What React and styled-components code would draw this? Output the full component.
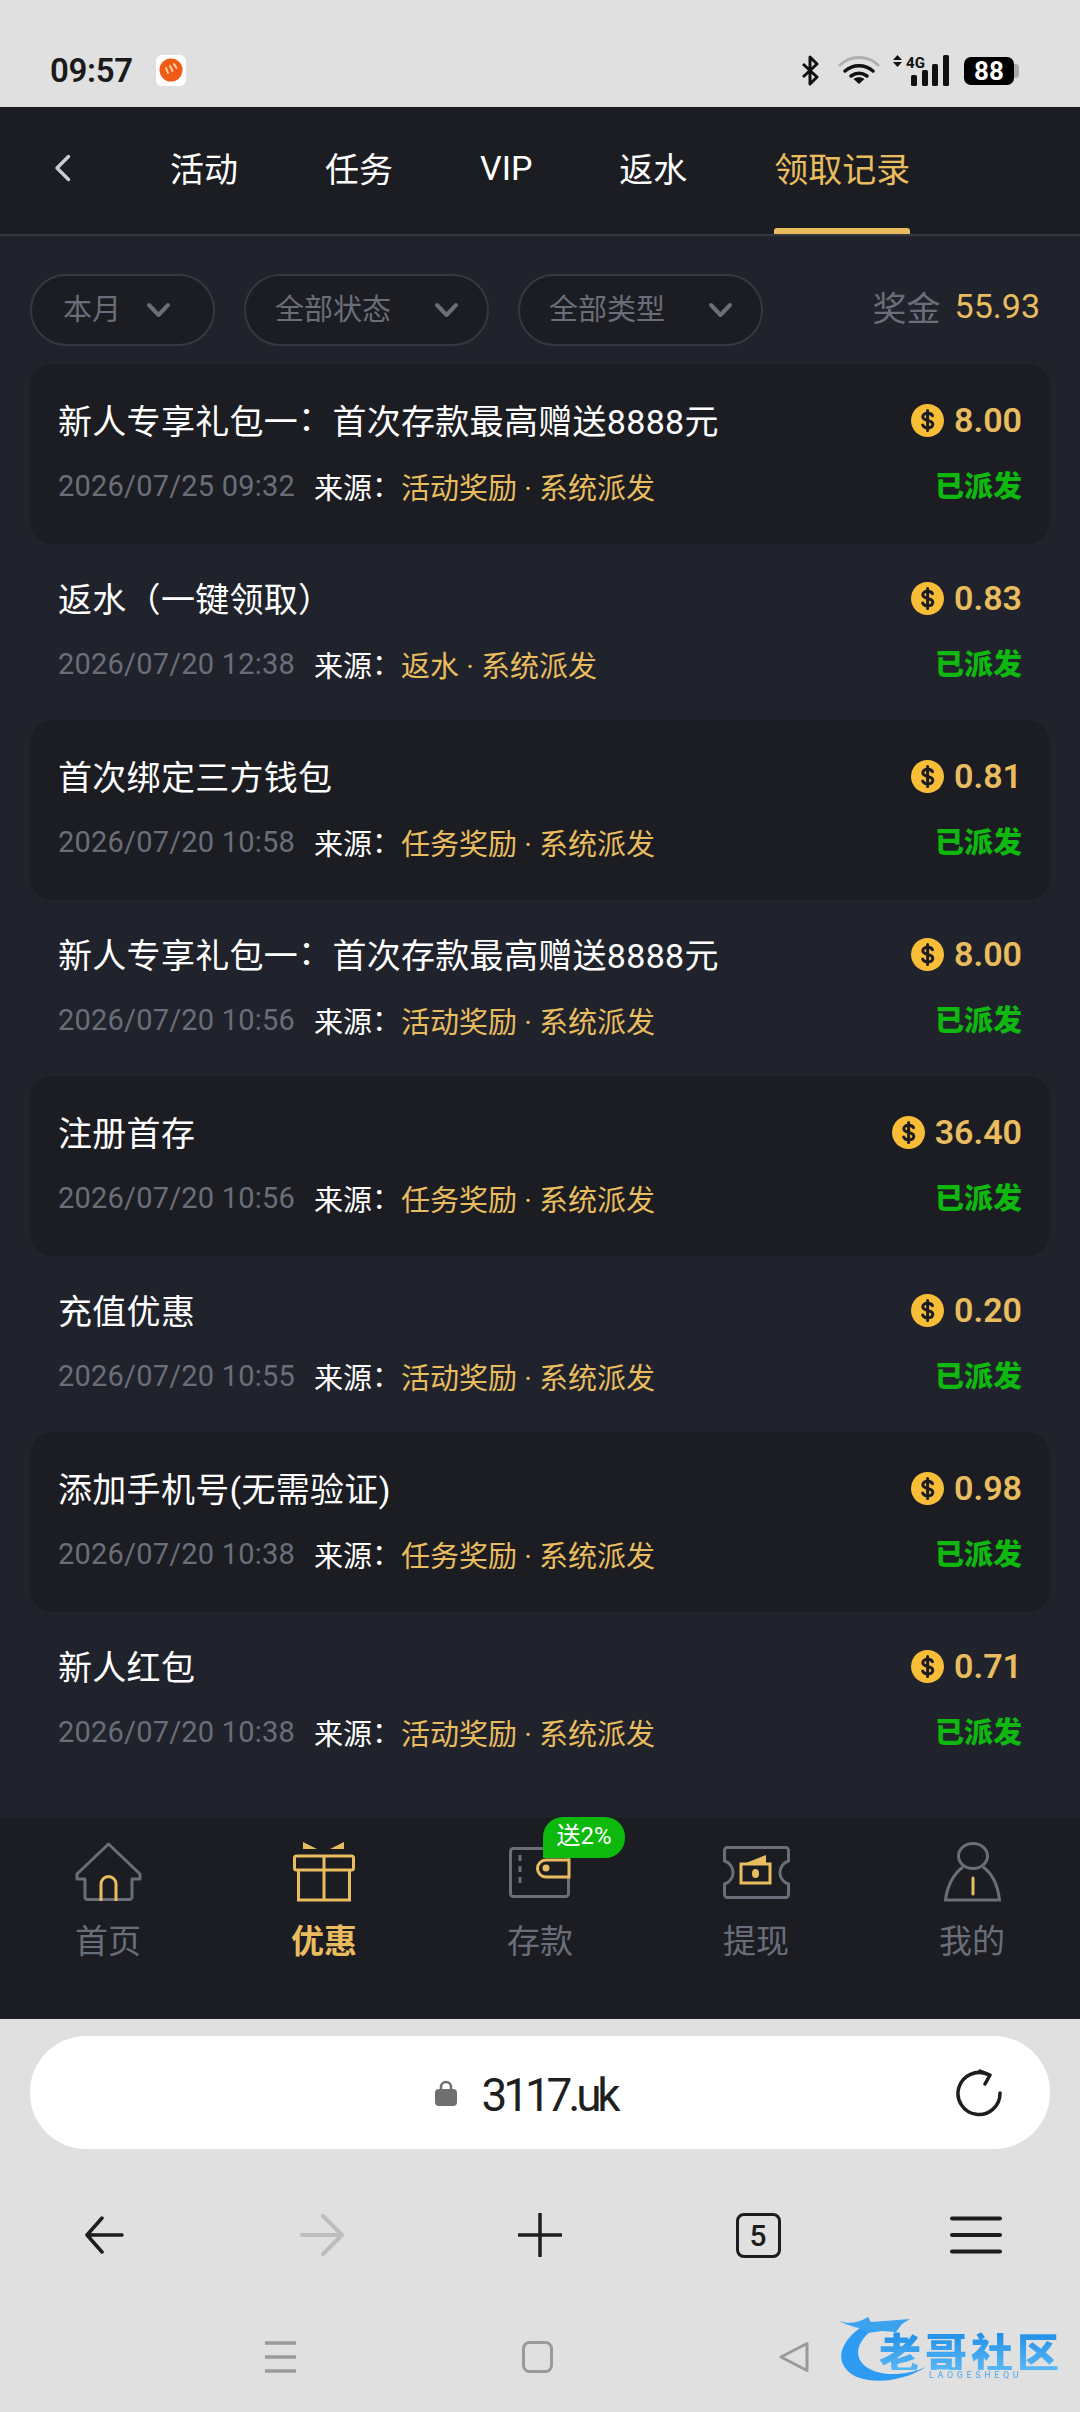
import React from 'react'
import styled, {createGlobalStyle} from 'styled-components'

const Gold = '#e9bd5f'
const Grey = '#6a6e78'
const Sans = `Roboto, "Noto Sans CJK SC", sans-serif`

const GlobalStyle = createGlobalStyle`
  html, body {
    margin: 0;
    padding: 0;
    background: #e0e0e0;
    font-family: ${Sans};
  }
  * { box-sizing: border-box; }
`
const Page = styled.div`
  position: relative;
  display: flex;
  flex-direction: column;
  width: 1080px;
  height: 2412px;
  overflow: hidden;
  background: #e0e0e0;
`
const StatusBar = styled.div`
  display: flex;
  align-items: flex-start;
  height: 107px;
  padding: 55px 66px 0 50px;
  flex: none;
`
const Clock = styled.div`
  font-size: 33px;
  line-height: 31px;
  font-weight: 600;
  letter-spacing: -0.3px;
  color: #1a1a1a;
  width: 106px;
`
const StatusIcons = styled.div`
  display: flex;
  align-items: flex-start;
  margin-left: auto;
`
const BatteryWrap = styled.div`
  position: relative;
  display: flex;
  align-items: center;
  justify-content: center;
  width: 50px;
  height: 28px;
  margin: 2px 0 0 15px;
  border-radius: 7px;
  background: #000;
  color: #fff;
  font-size: 26px;
  font-weight: 700;
  line-height: 28px;
  &::after {
    content: '';
    position: absolute;
    right: -5px;
    top: 7px;
    width: 5px;
    height: 14px;
    border-radius: 0 4px 4px 0;
    background: #a9a9a9;
  }
`
const TopNav = styled.div`
  display: flex;
  align-items: stretch;
  height: 129px;
  flex: none;
  background: #1c1d22;
  border-bottom: 2px solid #353842;
  padding-left: 54px;
`
const BackIcon = styled.svg`
  align-self: center;
  width: 17px;
  height: 28px;
  margin: -6px 99px 0 0;
  flex: none;
`
const Tabs = styled.div`
  display: flex;
  gap: 87px;
`
const Tab = styled.div`
  position: relative;
  display: flex;
  align-items: center;
  padding-bottom: 6px;
  font-size: 34px;
  color: ${p => (p.$active ? Gold : '#fff')};
  &::after {
    content: '';
    display: ${p => (p.$active ? 'block' : 'none')};
    position: absolute;
    left: 0;
    right: 0;
    bottom: 0;
    height: 6px;
    border-radius: 3px 3px 0 0;
    background: ${Gold};
  }
`
const Content = styled.div`
  flex: 1;
  min-height: 0;
  background: #20232b;
  overflow: hidden;
`
const FilterBar = styled.div`
  display: flex;
  align-items: center;
  gap: 29px;
  padding: 38px 40px 19px 30px;
`
const Pill = styled.div`
  display: flex;
  align-items: center;
  height: 72px;
  gap: ${p => (p.$short ? 25 : 43)}px;
  padding: ${p => (p.$short ? '0 42px 6px 31px' : '0 28px 6px 29px')};
  border: 2px solid #353842;
  border-radius: 36px;
  background: #1c1d22;
  color: ${Grey};
  font-size: 29px;
  svg { margin-top: 6px; }
`
const Bonus = styled.div`
  display: flex;
  align-items: center;
  gap: 14px;
  margin-left: auto;
  padding-bottom: 8px;
  font-size: 34px;
  color: ${Grey};
  span { color: ${Gold}; }
`
const Row = styled.div`
  display: flex;
  flex-direction: column;
  gap: 17px;
  height: ${p => (p.$dark ? 180 : 178)}px;
  margin: ${p => (p.$dark ? '-1px 30px' : '0 30px')};
  padding: ${p => (p.$dark ? 30 : 29)}px 28px 0;
  border-radius: 22px;
  background: ${p => (p.$dark ? '#1c1d22' : 'transparent')};
`
const RowLine = styled.div`
  display: flex;
  align-items: center;
  justify-content: space-between;
  height: 50px;
`
const Title = styled.div`
  font-size: 34px;
  letter-spacing: 0.3px;
  color: #fff;
  white-space: nowrap;
`
const Colon = styled.span`
  display: inline-block;
  transform: translateY(-0.08em);
`
const Amount = styled.div`
  display: flex;
  align-items: center;
  gap: 10px;
  padding-top: 2px;
  font-size: 34px;
  font-weight: 600;
  color: ${Gold};
`
const Coin = styled.svg`
  width: 33px;
  height: 33px;
`
const Meta = styled.div`
  display: flex;
  align-items: center;
  font-size: 29px;
  color: #fff;
  white-space: nowrap;
`
const Time = styled.span`
  color: ${Grey};
  margin-right: 19px;
  letter-spacing: 0.2px;
`
const Source = styled.span`
  color: ${Gold};
`
const Status = styled.div`
  margin-top: -4px;
  font-size: 29px;
  font-weight: 900;
  color: #0eb80e;
`
const BottomNav = styled.div`
  position: relative;
  display: grid;
  grid-template-columns: repeat(5, 1fr);
  height: 201px;
  flex: none;
  background: #1c1d22;
`
const NavItem = styled.div`
  position: relative;
  display: flex;
  flex-direction: column;
  align-items: center;
  padding-top: 24px;
  font-size: 33px;
  font-weight: ${p => (p.$active ? 700 : 400)};
  color: ${p => (p.$active ? Gold : Grey)};
`
const NavIconBox = styled.div`
  display: flex;
  align-items: center;
  justify-content: center;
  height: 60px;
  margin-bottom: 17px;
`
const NavLabel = styled.div`
  line-height: 46px;
`
const Badge = styled.div`
  position: absolute;
  top: -1px;
  left: 111px;
  width: 82px;
  height: 41px;
  border-radius: 20px 20px 20px 0;
  background: #0cb90c;
  color: #fff;
  font-size: 24px;
  font-weight: 400;
  line-height: 39px;
  text-align: center;
`
const AddressWrap = styled.div`
  flex: none;
  padding: 17px 30px 0;
`
const AddressBar = styled.div`
  position: relative;
  display: flex;
  align-items: center;
  justify-content: center;
  gap: 25px;
  height: 113px;
  border-radius: 56px;
  background: #fff;
  padding-right: 29px;
`
const Url = styled.div`
  padding-top: 5px;
  font-size: 46px;
  font-weight: 400;
  letter-spacing: -4.2px;
  color: #1f1f1f;
`
const Reload = styled.svg`
  position: absolute;
  right: 47px;
  top: 33px;
  width: 48px;
  height: 48px;
`
const Toolbar = styled.div`
  display: grid;
  grid-template-columns: repeat(5, 218px);
  justify-content: center;
  justify-items: center;
  align-items: center;
  height: 116px;
  margin-top: 28px;
  flex: none;
`
const TabCount = styled.div`
  display: flex;
  align-items: center;
  justify-content: center;
  width: 45px;
  height: 45px;
  border: 3px solid #1d1d1d;
  border-radius: 8px;
  color: #1d1d1d;
  font-size: 30px;
  font-weight: 500;
`
const SystemNav = styled.div`
  display: grid;
  grid-template-columns: repeat(3, 257px);
  justify-content: center;
  justify-items: center;
  height: 119px;
  padding: 48px 6px 0 0;
  flex: none;
`
const Logo = styled.div`
  position: absolute;
  left: 838px;
  top: 2315px;
  width: 224px;
  height: 68px;
  filter: blur(0.6px);
`
const LogoArc = styled.svg`
  position: absolute;
  left: 0;
  top: 0;
  width: 224px;
  height: 68px;
`
const LogoText = styled.div`
  position: absolute;
  left: 41px;
  top: 17px;
  font-family: "Noto Sans CJK SC", sans-serif;
  font-size: 42px;
  line-height: 38px;
  font-weight: 900;
  letter-spacing: 4px;
  white-space: nowrap;
  color: transparent;
  background: linear-gradient(#1f8fe8, #59b7f5);
  background-clip: text;
`
const LogoSub = styled.div`
  position: absolute;
  left: 91px;
  top: 55px;
  font-size: 9px;
  line-height: 10px;
  font-weight: 500;
  letter-spacing: 3.6px;
  color: #6cb2ea;
`

const records = [
  {title: '新人专享礼包一：首次存款最高赠送8888元', amount: '8.00', time: '2026/07/25 09:32', source: '活动奖励 · 系统派发'},
  {title: '返水（一键领取）', amount: '0.83', time: '2026/07/20 12:38', source: '返水 · 系统派发'},
  {title: '首次绑定三方钱包', amount: '0.81', time: '2026/07/20 10:58', source: '任务奖励 · 系统派发'},
  {title: '新人专享礼包一：首次存款最高赠送8888元', amount: '8.00', time: '2026/07/20 10:56', source: '活动奖励 · 系统派发'},
  {title: '注册首存', amount: '36.40', time: '2026/07/20 10:56', source: '任务奖励 · 系统派发'},
  {title: '充值优惠', amount: '0.20', time: '2026/07/20 10:55', source: '活动奖励 · 系统派发'},
  {title: '添加手机号(无需验证)', amount: '0.98', time: '2026/07/20 10:38', source: '任务奖励 · 系统派发'},
  {title: '新人红包', amount: '0.71', time: '2026/07/20 10:38', source: '活动奖励 · 系统派发'},
]

const tabs = ['活动', '任务', 'VIP', '返水']

// the full-width colon sits mid-height in the reference
const withColon = text => {
  const [head, tail] = text.split('：')
  return tail === undefined ? text : <>{head}<Colon>：</Colon>{tail}</>
}

const Chevron = () => (
  <svg width="25" height="16" viewBox="0 0 25 16" fill="none">
    <path d="M3 3l9.500 10L22 3" stroke={Grey} strokeWidth="4" strokeLinecap="round" strokeLinejoin="round"/>
  </svg>
)

const CoinIcon = () => (
  <Coin viewBox="0 0 33 33">
    <circle cx="16.500" cy="16.500" r="16.500" fill="#f8bd37"/>
    <path d="M21.500 11.600c-.8-1.600-2.600-2.400-4.800-2.400-2.800 0-4.900 1.400-4.900 3.600 0 4.900 10 2.600 10 7.500 0 2.300-2.200 3.600-5 3.600-2.400 0-4.300-1-5.100-2.800M16.600 6.400v20.200" fill="none" stroke="#1c1d22" strokeWidth="3" strokeLinecap="round"/>
  </Coin>
)

const HomeIcon = () => (
  <svg width="67" height="60" viewBox="0 0 67 60" fill="none">
    <path d="M33.500 2L65 32v5h-8v18a2.500 2.500 0 0 1-2.500 2.500h-42A2.500 2.500 0 0 1 10 55V37H2v-5z" stroke={Grey} strokeWidth="3" strokeLinejoin="round"/>
    <path d="M26 59V42a7.500 7.500 0 0 1 15 0v17" stroke={Gold} strokeWidth="3"/>
  </svg>
)

const GiftIcon = () => (
  <svg width="62" height="60" viewBox="0 0 62 60" fill="none">
    <path d="M10 0l14 7H10zM51 0L37 7h14z" fill={Gold}/>
    <rect x="1.500" y="14" width="59" height="14" rx="2" stroke={Gold} strokeWidth="3"/>
    <path d="M5.500 28v30h51V28M31 14v44" stroke={Gold} strokeWidth="3"/>
  </svg>
)

const WalletIcon = () => (
  <svg width="62" height="51" viewBox="0 0 62 51" fill="none">
    <rect x="1.500" y="1.500" width="58" height="48" rx="3" stroke={Grey} strokeWidth="3"/>
    <path d="M11 8v33" stroke={Grey} strokeWidth="3" strokeDasharray="6 5"/>
    <path d="M60 13H37a8.500 8.500 0 0 0 0 17h23z" fill="#1c1d22" stroke={Gold} strokeWidth="3"/>
    <circle cx="37" cy="21" r="3.500" fill={Gold}/>
  </svg>
)

const TicketIcon = () => (
  <svg width="67" height="53" viewBox="0 0 67 53" fill="none">
    <path d="M5 1.500h57a3 3 0 0 1 3.500 3V15a12 12 0 0 0 0 23v10.500a3 3 0 0 1-3.500 3H5a3 3 0 0 1-3.500-3V38a12 12 0 0 0 0-23V4.500a3 3 0 0 1 3.500-3z" stroke={Grey} strokeWidth="3"/>
    <rect x="18" y="18" width="29" height="19" stroke={Gold} strokeWidth="3"/>
    <path d="M23 17l20-8v8z" fill={Gold}/>
    <ellipse cx="32.500" cy="27.500" rx="3.500" ry="4.500" fill={Gold}/>
  </svg>
)

const PersonIcon = () => (
  <svg width="57" height="60" viewBox="0 0 57 60" fill="none">
    <ellipse cx="29" cy="14" rx="14.500" ry="12.500" stroke={Grey} strokeWidth="3"/>
    <path d="M19 25C9 32 3 45 1.500 58h54C54 45 49 32 39 25" stroke={Grey} strokeWidth="3"/>
    <path d="M29 36v16" stroke={Gold} strokeWidth="3" strokeLinecap="round"/>
  </svg>
)

const navItems = [
  {label: '首页', icon: <HomeIcon/>},
  {label: '优惠', icon: <GiftIcon/>, active: true},
  {label: '存款', icon: <WalletIcon/>, badge: '送2%'},
  {label: '提现', icon: <TicketIcon/>},
  {label: '我的', icon: <PersonIcon/>},
]

export default function App() {
  return (
    <Page>
      <GlobalStyle/>
      <StatusBar>
        <Clock>09:57</Clock>
        <svg width="30" height="31" viewBox="0 0 30 31">
          <rect width="30" height="31" rx="6" fill="#fff"/>
          <circle cx="15" cy="15" r="11.500" fill="#ef5a16"/>
          <path d="M10 13l2 5M14 11l2.500 5M18 9l2.500 4" stroke="#ffd9b0" strokeWidth="1.800" strokeLinecap="round"/>
        </svg>
        <StatusIcons>
          <svg width="18" height="31" viewBox="0 0 18 31" fill="none">
            <path d="M2 9l14 13-7 7V2l7 7L2 22" stroke="#111" strokeWidth="3" strokeLinejoin="round"/>
          </svg>
          <svg width="42" height="29" viewBox="0 0 42 29" fill="none" style={{marginLeft: 19}}>
            <path d="M2 10C12 0 30 0 40 10" stroke="#b0b0b0" strokeWidth="3" strokeLinecap="round"/>
            <path d="M7 16c8-7 20-7 28 0M13 21c5-3.500 11-3.500 16 0" stroke="#111" strokeWidth="3.500" strokeLinecap="round"/>
            <path d="M15.500 24L21 29l5.500-5c-3-2.500-8-2.500-11 0z" fill="#111"/>
          </svg>
          <svg width="56" height="31" viewBox="0 0 56 31" style={{marginLeft: 13}}>
            <path d="M4.500 0L9 5H0zM4.500 12L0 7h9z" fill="#111"/>
            <text x="13" y="13" fontFamily="Roboto, sans-serif" fontSize="15" fontWeight="700" fill="#111" textLength="19">4G</text>
            <rect x="18" y="20" width="6" height="11" rx="1.500" fill="#111"/>
            <rect x="29" y="15" width="6" height="16" rx="1.500" fill="#111"/>
            <rect x="39" y="9" width="6" height="22" rx="1.500" fill="#111"/>
            <rect x="50" y="0" width="6" height="31" rx="1.500" fill="#111"/>
          </svg>
          <BatteryWrap>88</BatteryWrap>
        </StatusIcons>
      </StatusBar>

      <TopNav>
        <BackIcon viewBox="0 0 17 28" fill="none">
          <path d="M14.500 2.500L3 14l11.500 11.500" stroke="#c9ccd3" strokeWidth="3.500" strokeLinecap="round" strokeLinejoin="round"/>
        </BackIcon>
        <Tabs>
          {tabs.map(t => <Tab key={t}>{t}</Tab>)}
          <Tab $active>领取记录</Tab>
        </Tabs>
      </TopNav>

      <Content>
        <FilterBar>
          <Pill $short>本月<Chevron/></Pill>
          <Pill>全部状态<Chevron/></Pill>
          <Pill>全部类型<Chevron/></Pill>
          <Bonus>奖金 <span>55.93</span></Bonus>
        </FilterBar>
        {records.map((r, i) => (
          <Row key={i} $dark={i % 2 === 0}>
            <RowLine>
              <Title>{withColon(r.title)}</Title>
              <Amount><CoinIcon/>{r.amount}</Amount>
            </RowLine>
            <RowLine>
              <Meta>
                <Time>{r.time}</Time>
                <span>{withColon('来源：')}</span><Source>{r.source}</Source>
              </Meta>
              <Status>已派发</Status>
            </RowLine>
          </Row>
        ))}
      </Content>

      <BottomNav>
        {navItems.map(item => (
          <NavItem key={item.label} $active={item.active}>
            <NavIconBox>{item.icon}</NavIconBox>
            <NavLabel>{item.label}</NavLabel>
            {item.badge && <Badge>{item.badge}</Badge>}
          </NavItem>
        ))}
      </BottomNav>

      <AddressWrap>
        <AddressBar>
          <svg width="22" height="26" viewBox="0 0 22 26" fill="none">
            <path d="M6 10V7a5 5 0 0 1 10 0v3" stroke="#6f6f6f" strokeWidth="2.500"/>
            <rect y="9" width="22" height="17" rx="4" fill="#6f6f6f"/>
          </svg>
          <Url>3117.uk</Url>
          <Reload viewBox="0 0 48 48" fill="none">
            <path d="M33 5.500A21 21 0 1 0 45 24" stroke="#1d1d1d" strokeWidth="3.500" strokeLinecap="round"/>
            <path d="M25 2l10 4-5 9" stroke="#1d1d1d" strokeWidth="3.500" strokeLinecap="round" strokeLinejoin="round"/>
          </Reload>
        </AddressBar>
      </AddressWrap>

      <Toolbar>
        <svg width="40" height="38" viewBox="0 0 40 38" fill="none">
          <path d="M18 2L3 19l15 17M3 19h35" stroke="#1d1d1d" strokeWidth="3.500" strokeLinecap="round" strokeLinejoin="round"/>
        </svg>
        <svg width="46" height="42" viewBox="0 0 46 42" fill="none">
          <path d="M24 2l19 19-19 19M3 21h40" stroke="#bdbdbd" strokeWidth="4" strokeLinecap="round" strokeLinejoin="round"/>
        </svg>
        <svg width="44" height="44" viewBox="0 0 44 44" fill="none">
          <path d="M22 1v42M1 22h42" stroke="#1d1d1d" strokeWidth="3.500" strokeLinecap="round"/>
        </svg>
        <TabCount>5</TabCount>
        <svg width="52" height="38" viewBox="0 0 52 38" fill="none">
          <path d="M2 2.500h48M2 19h48M2 35.500h48" stroke="#1d1d1d" strokeWidth="4" strokeLinecap="round"/>
        </svg>
      </Toolbar>

      <SystemNav>
        <svg width="31" height="32" viewBox="0 0 31 32" fill="none">
          <path d="M0 2h31M0 16h31M0 30h31" stroke="#9a9a9a" strokeWidth="3.500"/>
        </svg>
        <svg width="31" height="32" viewBox="0 0 31 32" fill="none">
          <rect x="1.500" y="1.500" width="28" height="29" rx="6" stroke="#9a9a9a" strokeWidth="3"/>
        </svg>
        <svg width="30" height="32" viewBox="0 0 30 32" fill="none">
          <path d="M28 2.500v27L2 16z" stroke="#9a9a9a" strokeWidth="3" strokeLinejoin="round"/>
        </svg>
      </SystemNav>

      <Logo>
        <LogoArc viewBox="0 0 224 68" fill="none">
          <path d="M30 8C8 20-4 40 8 54c12 16 52 16 80-2-22 10-52 10-64-4-10-12 0-28 18-38z" fill="#2e9bf2"/>
          <path d="M0 5c10 5 20 3 30-3l3 5 14-1 25-2-8 5-6 8-14-1-14 2C24 12 10 12 0 5z" fill="#3aa2ef"/>
        </LogoArc>
        <LogoText>老哥社区</LogoText>
        <LogoSub>LAOGESHEQU</LogoSub>
      </Logo>
    </Page>
  )
}
